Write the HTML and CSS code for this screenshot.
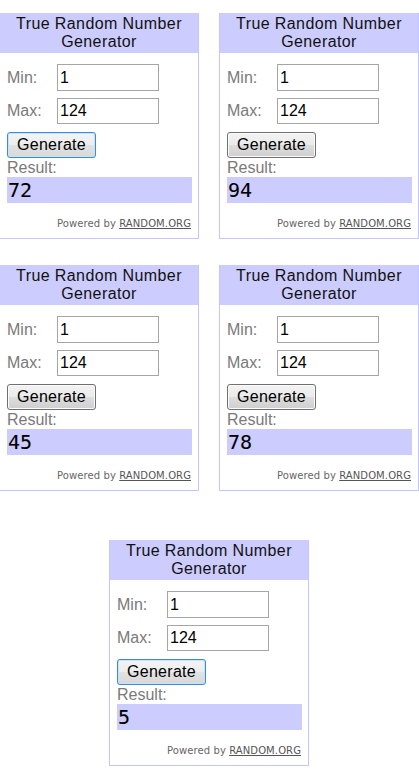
FILE: index.html
```html
<!DOCTYPE html>
<html>
<head>
<meta charset="utf-8">
<title>True Random Number Generator</title>
<link rel="stylesheet" href="styles.css">
</head>
<body>
<div class="page">
  <div class="row row-1">
    <div class="widget">
      <div class="head">True Random Number<br>Generator</div>
      <div class="body">
        <div class="field"><span class="lbl">Min:</span><span class="inp">1</span></div>
        <div class="field"><span class="lbl">Max:</span><span class="inp">124</span></div>
        <button class="btn focused">Generate</button>
        <div class="res-lbl">Result:</div>
        <div class="res">72</div>
        <div class="powered">Powered by <span class="org">RANDOM.ORG</span></div>
      </div>
    </div>
    <div class="widget">
      <div class="head">True Random Number<br>Generator</div>
      <div class="body">
        <div class="field"><span class="lbl">Min:</span><span class="inp">1</span></div>
        <div class="field"><span class="lbl">Max:</span><span class="inp">124</span></div>
        <button class="btn">Generate</button>
        <div class="res-lbl">Result:</div>
        <div class="res">94</div>
        <div class="powered">Powered by <span class="org">RANDOM.ORG</span></div>
      </div>
    </div>
  </div>
  <div class="row row-2">
    <div class="widget">
      <div class="head">True Random Number<br>Generator</div>
      <div class="body">
        <div class="field"><span class="lbl">Min:</span><span class="inp">1</span></div>
        <div class="field"><span class="lbl">Max:</span><span class="inp">124</span></div>
        <button class="btn">Generate</button>
        <div class="res-lbl">Result:</div>
        <div class="res">45</div>
        <div class="powered">Powered by <span class="org">RANDOM.ORG</span></div>
      </div>
    </div>
    <div class="widget">
      <div class="head">True Random Number<br>Generator</div>
      <div class="body">
        <div class="field"><span class="lbl">Min:</span><span class="inp">1</span></div>
        <div class="field"><span class="lbl">Max:</span><span class="inp">124</span></div>
        <button class="btn">Generate</button>
        <div class="res-lbl">Result:</div>
        <div class="res">78</div>
        <div class="powered">Powered by <span class="org">RANDOM.ORG</span></div>
      </div>
    </div>
  </div>
  <div class="row row-3">
    <div class="widget">
      <div class="head">True Random Number<br>Generator</div>
      <div class="body">
        <div class="field"><span class="lbl">Min:</span><span class="inp">1</span></div>
        <div class="field"><span class="lbl">Max:</span><span class="inp">124</span></div>
        <button class="btn focused">Generate</button>
        <div class="res-lbl">Result:</div>
        <div class="res">5</div>
        <div class="powered">Powered by <span class="org">RANDOM.ORG</span></div>
      </div>
    </div>
  </div>
</div>
</body>
</html>
```

FILE: styles.css
```css
* { box-sizing: border-box; }
html, body { margin: 0; padding: 0; background: #ffffff; }
body { font-family: "Liberation Sans", Arial, sans-serif; color: #000; overflow: hidden; }

.page { padding-top: 13px; }

.row { display: flex; gap: 20px; }
.row-1 { margin-left: -1px; }
.row-2 { margin-left: -1px; margin-top: 26px; }
.row-3 { padding-left: 109px; margin-top: 49px; }

.widget {
  width: 200px;
  height: 226px;
  border: 1px solid #c4c4ff;
  border-top: none;
  background: #fff;
  flex: none;
}

.head {
  background: #ccccff;
  text-align: center;
  font-size: 16px;
  letter-spacing: 0.4px;
  line-height: 18px;
  height: 40px;
  padding-top: 2px;
  color: #111;
}

.body { padding: 0 6px 0 7px; }

.field {
  display: flex;
  align-items: center;
  height: 27px;
  margin-top: 11px;
}
.field + .field { margin-top: 7px; height: 26px; }

.lbl {
  width: 50px;
  font-size: 16px;
  color: #7a7a7a;
}

.inp {
  width: 102px;
  height: 100%;
  border: 1px solid #a5a5a5;
  padding-left: 2px;
  font-size: 16px;
  display: flex;
  align-items: center;
  color: #000;
}

.btn {
  display: block;
  margin-top: 8px;
  width: 89px;
  height: 26px;
  padding: 0;
  font-family: "Liberation Sans", Arial, sans-serif;
  font-size: 16px;
  letter-spacing: 0.3px;
  color: #000;
  border: 1px solid #707070;
  border-radius: 3px;
  background: linear-gradient(#f3f3f3 0%, #ebebeb 48%, #dddddd 52%, #cfcfcf 100%);
  box-shadow: inset 0 0 0 1px #fcfcfc;
}
.btn.focused {
  border-color: #3c8adb;
  box-shadow: inset 0 0 0 1px #c8e4fb;
  background: linear-gradient(#f4f4f4 0%, #ededed 48%, #e2e2e2 52%, #d8d8d8 100%);
}

.res-lbl {
  font-size: 16px;
  color: #7a7a7a;
  height: 19px;
  line-height: 19px;
}

.res {
  background: #ccccff;
  height: 26px;
  line-height: 27px;
  padding-left: 1px;
  font-family: "DejaVu Sans Mono", "Liberation Mono", monospace;
  font-size: 20px;
  -webkit-text-stroke: 0.1px #000;
  color: #000;
}

.powered {
  text-align: right;
  font-family: "DejaVu Sans", Verdana, sans-serif;
  font-size: 10px;
  letter-spacing: 0.1px;
  color: #666;
  line-height: 12px;
  margin-top: 15px;
  padding-right: 1px;
}
.org { text-decoration: underline; color: #555; }
```
